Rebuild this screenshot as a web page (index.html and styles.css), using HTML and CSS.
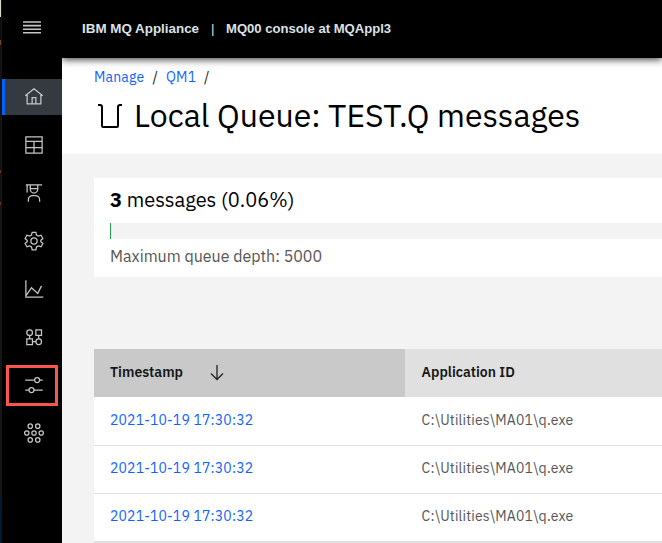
FILE: index.html
```html
<!DOCTYPE html>
<html lang="en">
<head>
<meta charset="utf-8">
<title>IBM MQ Appliance</title>
<link rel="stylesheet" href="styles.css">
</head>
<body>
<div class="app">
  <div class="edge"></div>
  <nav class="side">
    <button class="menu" aria-label="Menu"><svg viewBox="0 0 20 14" width="20" height="14"><path d="M1 1h18M1 4.600h18M1 8.200h18M1 11.800h18" stroke-width="1.600"/></svg></button>
    <a class="item active"><svg class="icon" viewBox="0 0 32 32"><path d="M2 14L16 3l14 11M5 12v15h22V12M13 27V17h6v10"/></svg></a>
    <a class="item"><svg class="icon" viewBox="0 0 32 32"><path d="M3 3h26v26H3zM3 10h26M3 20h26M16 10v19"/></svg></a>
    <a class="item"><svg class="icon" viewBox="0 0 32 32"><path d="M3 3h26M5 3v12M10 3v7a6 6 0 0 0 12 0V3M10 9h12M7 30v-3a7 7 0 0 1 7-7h4a7 7 0 0 1 7 7v3"/></svg></a>
    <a class="item"><svg class="icon" viewBox="0 0 32 32"><path d="M13 2h6l1 4.5 3 1.7 4.3-1.4 3 5.2-3.4 3v2l3.4 3-3 5.2-4.300-1.400-3 1.700L19 30h-6l-1-4.500-3-1.700-4.300 1.400-3-5.200 3.400-3v-2l-3.400-3 3-5.200L9 8.200l3-1.700z"/><circle cx="16" cy="16" r="5"/></svg></a>
    <a class="item"><svg class="icon" viewBox="0 0 32 32"><path d="M3 2v27h28M3 27l9-13 10 9 6-12"/></svg></a>
    <a class="item"><svg class="icon" viewBox="0 0 32 32"><circle cx="9" cy="9" r="4.500"/><path d="M19 4.500h9v9h-9zM4.500 19h9v9h-9zM9 13.500V19M23.500 13.500V19M13.500 23.500H19"/><circle cx="23.500" cy="23.500" r="4.500"/></svg></a>
    <a class="item marked"><svg class="icon" viewBox="0 0 32 32"><path d="M2 8h15M25 8h5M2 24h6M16 24h14"/><circle cx="21" cy="8" r="4"/><circle cx="12" cy="24" r="4"/></svg></a>
    <a class="item"><svg class="icon" viewBox="0 0 32 32"><circle cx="10" cy="5" r="3.500"/><circle cx="22" cy="5" r="3.500"/><circle cx="4.500" cy="16" r="3.500"/><circle cx="16" cy="16" r="3.500"/><circle cx="27.500" cy="16" r="3.500"/><circle cx="10" cy="27" r="3.500"/><circle cx="22" cy="27" r="3.500"/></svg></a>
  </nav>
  <div class="page">
    <header class="top"><span class="product">IBM MQ Appliance</span><span class="bar">|</span><span class="console">MQ00 console at MQAppl3</span></header>
    <section class="heading">
      <div class="crumbs"><a class="c1">Manage</a><span>/</span><a class="c2">QM1</a><span>/</span></div>
      <div class="title"><svg class="queue" viewBox="0 0 24 24" width="24" height="24"><path d="M0 1h2q2 0 2 2v19q0 1 1 1h14q1 0 1-1V3q0-2 2-2h2"/></svg><h1>Local Queue: TEST.Q messages</h1></div>
    </section>
    <main class="content">
      <section class="depth">
        <div class="count"><b>3</b> messages (0.06%)</div>
        <div class="track"><div class="fill"></div></div>
        <div class="max">Maximum queue depth: 5000</div>
      </section>
      <div class="table">
        <div class="row head"><div class="cell sorted"><span class="ts">Timestamp</span><svg class="arrow" viewBox="0 0 14 16" width="14" height="16"><path d="M7 0v14M1 8.500L7 14.500 13 8.500"/></svg></div><div class="cell app-id">Application ID</div></div>
        <div class="row"><div class="cell"><a class="date">2021-10-19 17:30:32</a></div><div class="cell path">C:\Utilities\MA01\q.exe</div></div>
        <div class="row"><div class="cell"><a class="date">2021-10-19 17:30:32</a></div><div class="cell path">C:\Utilities\MA01\q.exe</div></div>
        <div class="row"><div class="cell"><a class="date">2021-10-19 17:30:32</a></div><div class="cell path">C:\Utilities\MA01\q.exe</div></div>
      </div>
    </main>
  </div>
</div>
</body>
</html>
```
FILE: styles.css
```css
* { box-sizing: border-box; }
body { margin: 0; background: #f3f3f3; font-family: "IBM Plex Sans", Roboto, sans-serif; color: #161616; overflow: hidden; }
.app { display: grid; grid-template-columns: 2px 60px 1fr; height: 543px; white-space: nowrap; }
.edge { background: linear-gradient(#d8d8c8 0 17px, #10080a 17px 40px, #7a4310 40px 45px, #171113 45px 170px, #7a2c0b 170px 173px, #171113 173px 202px, #7a2c0b 202px 205px, #161616 205px 498px, #001a36 498px); border-right: 1px solid #161616; }
.side { background: #000; }
.menu { display: flex; justify-content: center; width: 60px; height: 79px; padding: 21px 0 0; border: 0; background: none; }
.menu svg, .icon { fill: none; stroke: #c6c6c6; }
.icon { width: 20px; height: 20px; stroke-width: 2; }
.item { display: flex; align-items: center; justify-content: center; height: 36px; margin-bottom: 12px; padding-left: 4px; }
.active { background: #343a3f; border-left: 3px solid #0062ff; padding-left: 1px; }
.marked { height: 35px; margin: 13px 7px 12px; padding-bottom: 1px; outline: 3px solid #f9574b; }
.page { min-width: 0; overflow: hidden; display: flex; flex-direction: column; }
.top { position: relative; flex: none; height: 58px; display: flex; align-items: center; padding: 0 0 2px 20px; background: #000; color: #dde1e6; font: bold 13.400px "Liberation Sans", sans-serif; box-shadow: 0 2px 7px rgba(0,0,0,.7); }
.product { width: 129px; }
.bar { width: 15px; font-weight: normal; }
.console { font-size: 13.100px; }
.heading { flex: none; height: 96px; background: #fff; padding: 10px 32px 0; }
.crumbs { display: flex; gap: 8px; height: 18px; line-height: 18px; font-size: 14px; letter-spacing: .16px; }
a { color: #0f62fe; }
.c1 { width: 50.500px; }
.c2 { width: 30px; }
.title { display: flex; align-items: center; height: 40px; margin-top: 9px; }
.queue { margin: 1px 12px 0 4px; fill: none; stroke: #000; stroke-width: 2; }
h1 { margin: 0; font-size: 32px; font-weight: 400; color: #000; line-height: 40px; }
.content { padding: 24px 0 0 32px; }
.depth { height: 99px; background: #fff; padding: 8px 0 0 16px; }
.count { height: 28px; line-height: 28px; font-size: 20px; color: #000; }
.track { height: 16px; margin-top: 9px; background: #f3f3f3; }
.fill { width: 1px; height: 16px; background: #24a148; }
.max { margin-top: 5px; line-height: 24px; font-size: 16px; color: #565656; }
.table { margin-top: 72px; border-bottom: 2px solid #e0e0e0; }
.row { display: grid; grid-template-columns: 311px 1fr; height: 48px; background: #fff; }
.row:nth-child(n+3) { box-shadow: inset 0 1px #e0e0e0; }
.cell { display: flex; align-items: center; padding: 0 0 2px 16px; font-size: 14px; letter-spacing: .16px; }
.head { background: #e0e0e0; font-weight: 600; }
.head .cell { letter-spacing: 0; }
.sorted { background: #c9c9c9; }
.ts { width: 73px; }
.arrow { margin: 2px 0 0 27px; fill: none; stroke: #222; stroke-width: 1.300; }
.path { color: #565656; }
.path, .head .app-id { padding-left: 16.600px; }
```
